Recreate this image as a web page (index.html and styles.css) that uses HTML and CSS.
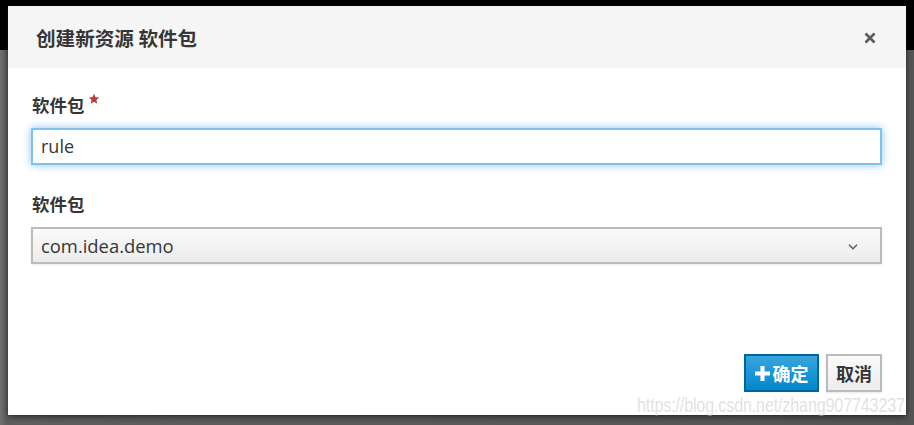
FILE: index.html
```html
<!DOCTYPE html>
<html lang="zh-CN">
<head>
<meta charset="utf-8">
<title>创建新资源 软件包</title>
<link rel="stylesheet" href="styles.css">
</head>
<body>
<div class="backdrop">
  <div class="dialog">
    <div class="dialog-header">
      <h4 class="dialog-title">创建新资源 软件包</h4>
      <span class="close">
        <svg width="12" height="12" viewBox="0 0 12 12"><path d="M1.5 1.5 L10.5 10.5 M10.5 1.5 L1.5 10.5" stroke="#5b5b5b" stroke-width="2.6" stroke-linecap="butt"/></svg>
      </span>
    </div>
    <div class="dialog-body">
      <div class="field">
        <label class="label">软件包<span class="req">
          <svg width="12" height="12" viewBox="0 0 24 24"><path d="M12 1.5l3.1 7 7.4.6-5.7 4.9 1.8 7.4L12 17.4 5.4 21.4l1.8-7.4L1.5 9.1l7.4-.6z" fill="#c13a3a"/></svg>
        </span></label>
        <div class="input focus">rule</div>
      </div>
      <div class="field">
        <label class="label">软件包</label>
        <div class="select">
          <span>com.idea.demo</span>
          <svg class="chev" width="10" height="6" viewBox="0 0 10 6"><path d="M1 0.8 L5 4.8 L9 0.8" fill="none" stroke="#555" stroke-width="1.3"/></svg>
        </div>
      </div>
    </div>
    <div class="dialog-footer">
      <button class="btn btn-primary"><svg width="15" height="15" viewBox="0 0 14 14"><path d="M5.1 0h3.8v5.1H14v3.8H8.9V14H5.1V8.9H0V5.1h5.1z" fill="#fff"/></svg>确定</button>
      <button class="btn btn-default">取消</button>
    </div>
  </div>
  <div class="watermark">https://blog.csdn.net/zhang907743237</div>
</div>
</body>
</html>
```

FILE: styles.css
```css
html, body {
  margin: 0;
  padding: 0;
  width: 914px;
  height: 425px;
  overflow: hidden;
}
body {
  font-family: "Open Sans", "Noto Sans CJK SC", sans-serif;
  color: #363636;
}
.backdrop {
  position: relative;
  width: 914px;
  height: 425px;
  box-sizing: border-box;
  padding: 6px 8px 0 8px;
  background:
    linear-gradient(to bottom, #000 0, #000 50px, transparent 50px),
    linear-gradient(to right, #707070 0, #5e5e5e 6px, #555 100%);
}
.dialog {
  width: 898px;
  height: 409px;
  background: #fff;
  display: flex;
  flex-direction: column;
  box-shadow: 0 2px 6px rgba(0,0,0,0.55), 0 0 1px #333;
}
.dialog-header {
  height: 62px;
  flex: none;
  background: #f5f5f5;
  display: flex;
  align-items: center;
  justify-content: space-between;
  padding: 0 30px 0 28px;
  box-sizing: border-box;
}
.dialog-title {
  margin: 0;
  font-family: "Noto Sans CJK SC", sans-serif;
  font-size: 19.6px;
  font-weight: 700;
  color: #363636;
  line-height: 24px;
  padding-top: 1px;
}
.close {
  display: flex;
  width: 12px;
  height: 12px;
  margin-top: 2px;
}
.dialog-body {
  flex: 1;
  padding: 25px 24px 0 23px;
  display: flex;
  flex-direction: column;
}
.field {
  display: flex;
  flex-direction: column;
}
.field + .field {
  margin-top: 27px;
}
.label {
  font-family: "Noto Sans CJK SC", sans-serif;
  font-weight: 700;
  font-size: 17.5px;
  line-height: 24px;
  color: #363636;
  padding-left: 1px;
  margin-bottom: 11px;
  display: flex;
  align-items: flex-start;
}
.req {
  display: inline-flex;
  margin-left: 3px;
  margin-top: 0;
}
.input {
  height: 37px;
  box-sizing: border-box;
  border: 2px solid #7fc3ea;
  background: #fff;
  font-size: 18px;
  line-height: 33px;
  padding: 0 8px;
  color: #363636;
  box-shadow: 0 0 8px rgba(102,175,233,0.75);
}
.select {
  height: 37px;
  box-sizing: border-box;
  border: 2px solid #bbb;
  background: linear-gradient(to bottom, #fafafa 0, #ececec 100%);
  font-size: 18.4px;
  line-height: 33px;
  padding: 0 22px 0 8px;
  color: #363636;
  display: flex;
  align-items: center;
  justify-content: space-between;
  box-shadow: 0 1px 2px rgba(0,0,0,0.08);
}
.chev {
  margin-top: 2px;
}
.dialog-footer {
  flex: none;
  display: flex;
  justify-content: flex-end;
  gap: 7px;
  padding: 0 24px 23px 0;
}
.btn {
  height: 38px;
  box-sizing: border-box;
  font-family: "Noto Sans CJK SC", sans-serif;
  font-weight: 700;
  font-size: 18px;
  line-height: 1;
  display: flex;
  align-items: center;
  justify-content: center;
  gap: 3px;
  padding: 0;
  cursor: pointer;
}
.btn-primary {
  width: 75px;
  color: #fff;
  border: 2px solid #00659c;
  background: linear-gradient(to bottom, #39a5dc 0, #0088ce 100%);
}
.btn-default {
  width: 56px;
  color: #363636;
  border: 2px solid #bbb;
  background: linear-gradient(to bottom, #fafafa 0, #ededed 100%);
  box-shadow: 0 1px 2px rgba(0,0,0,0.1);
}
.watermark {
  position: absolute;
  left: 637px;
  top: 393px;
  font-family: "Liberation Sans", Arial, sans-serif;
  font-size: 19.5px;
  letter-spacing: -0.2px;
  color: rgba(200,200,200,0.55);
  line-height: 24px;
  white-space: nowrap;
  transform: scaleX(0.828);
  transform-origin: 0 0;
}
```
